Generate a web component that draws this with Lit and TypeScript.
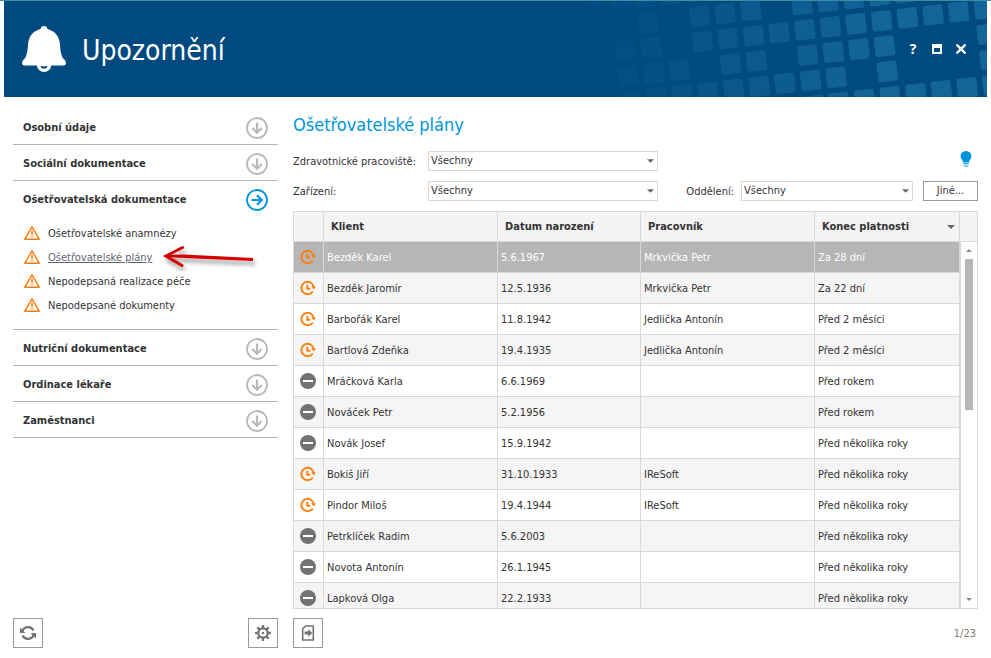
import { LitElement, html, svg, css } from "lit";
import { customElement, state } from "lit/decorators.js";
import { classMap } from "lit/directives/class-map.js";

type Status = "clock" | "minus";
interface Row { status: Status; client: string; born: string; worker: string; ends: string; }

const ROWS: Row[] = [
  { status: "clock", client: "Bezděk Karel", born: "5.6.1967", worker: "Mrkvička Petr", ends: "Za 28 dní" },
  { status: "clock", client: "Bezděk Jaromír", born: "12.5.1936", worker: "Mrkvička Petr", ends: "Za 22 dní" },
  { status: "clock", client: "Barbořák Karel", born: "11.8.1942", worker: "Jedlička Antonín", ends: "Před 2 měsíci" },
  { status: "clock", client: "Bartlová Zdeňka", born: "19.4.1935", worker: "Jedlička Antonín", ends: "Před 2 měsíci" },
  { status: "minus", client: "Mráčková Karla", born: "6.6.1969", worker: "", ends: "Před rokem" },
  { status: "minus", client: "Nováček Petr", born: "5.2.1956", worker: "", ends: "Před rokem" },
  { status: "minus", client: "Novák Josef", born: "15.9.1942", worker: "", ends: "Před několika roky" },
  { status: "clock", client: "Bokiš Jiří", born: "31.10.1933", worker: "IReSoft", ends: "Před několika roky" },
  { status: "clock", client: "Pindor Miloš", born: "19.4.1944", worker: "IReSoft", ends: "Před několika roky" },
  { status: "minus", client: "Petrklíček Radim", born: "5.6.2003", worker: "", ends: "Před několika roky" },
  { status: "minus", client: "Novota Antonín", born: "26.1.1945", worker: "", ends: "Před několika roky" },
  { status: "minus", client: "Lapková Olga", born: "22.2.1933", worker: "", ends: "Před několika roky" },
];

const SECTIONS: { title: string; items?: string[] }[] = [
  { title: "Osobní údaje" },
  { title: "Sociální dokumentace" },
  {
    title: "Ošetřovatelská dokumentace",
    items: ["Ošetřovatelské anamnézy", "Ošetřovatelské plány", "Nepodepsaná realizace péče", "Nepodepsané dokumenty"],
  },
  { title: "Nutriční dokumentace" },
  { title: "Ordinace lékaře" },
  { title: "Zaměstnanci" },
];

/* Tilted lattice of the banner: row number -> occupied columns. */
const LATTICE: [number, number[]][] = [
  [-1, [-4, -3, -2, -1, 0]],
  [0, [-2, 0, 1, 2, 4, 5, 6, 7, 8]],
  [1, [-3, -2, 0, 1, 2, 3, 4, 5, 6, 7, 8, 9, 10, 11]],
  [2, [-3, -2, -1, 1, 2, 4, 5, 6, 7, 11]],
  [3, [-3, -2, -1, 0, 1, 2, 3, 4, 5, 7, 11]],
  [4, [4, 5, 6, 7, 8, 9, 10, 11]],
];

const lattice = () => html`
  <svg class="lattice" viewBox="0 3 1191 288" aria-hidden="true">
    ${LATTICE.flatMap(([j, cols]) =>
      cols.map((i) => {
        const x = 337 + 76.9 * i + 8.5 * (j - 1);
        const y = 125 - 8.9 * i + 75.8 * (j - 1);
        const o = Math.min(1, Math.max(0.08, (x + 20) / 860));
        return svg`<rect x="-30" y="-30" width="60" height="60" rx="7" fill="#136499" fill-opacity=${o.toFixed(2)}
          transform="translate(${x.toFixed(1)} ${y.toFixed(1)}) rotate(-6.6)"/>`;
      })
    )}
  </svg>`;

const bell = html`
  <svg class="bell" viewBox="0 0 44 46" aria-hidden="true">
    <path fill="#fff" d="M22 0c1.900 0 3.300 1.300 3.400 3.100C33.500 5 37.500 11 38 19c.6 8.500 1.800 12.600 4.700 15.100 1.900 1.700 1.600 5.400-1 5.400H2.300c-2.600 0-2.900-3.700-1-5.400C4.200 31.600 5.400 27.500 6 19 6.500 11 10.500 5 18.600 3.100 18.700 1.300 20.100 0 22 0z"/>
    <path fill="#fff" d="M15 38h14.200v1.500a7.100 6.500 0 0 1-14.200 0z"/>
    <path fill="#004a80" d="M18.500 39.800q1.700.8 3.500.8t3.500-.8q-.4 3-3.500 3t-3.500-3z"/>
  </svg>`;

const circleArrow = (open: boolean) => html`
  <svg class=${classMap({ circle: true, open })} viewBox="0 0 22 22" aria-hidden="true">
    <g fill="none" stroke="currentColor" transform=${open ? "rotate(-90 11 11)" : "rotate(0)"}>
      <circle cx="11" cy="11" r="10" stroke-width="1.800"/>
      <path stroke-width="2.200" d="M11 5.500v10.500M6.300 11l4.700 4.700 4.700-4.700"/>
    </g>
  </svg>`;

const warning = html`
  <svg class="warn" viewBox="0 0 16 14" aria-hidden="true">
    <path d="M8 1 15.200 13.200H.8z" fill="none" stroke="#fb7f10" stroke-width="1.500" stroke-linejoin="round"/>
    <path d="M8 5v4M8 10v1.600" stroke="#fb7f10" stroke-width="1.600"/>
  </svg>`;

const statusIcon = (s: Status) =>
  s === "clock"
    ? html`<svg class="status" viewBox="0 0 16 16" role="img" aria-label="Čeká">
        <path d="M12.800 11.400A6.200 6.200 0 1 1 13.800 7.500" fill="none" stroke="#fb7f10" stroke-width="1.900"/>
        <path d="M11.200 6.200H16L13.800 9.400z" fill="#fb7f10"/>
        <path d="M7.300 4.800v3.900h3" fill="none" stroke="#fb7f10" stroke-width="1.900"/>
      </svg>`
    : html`<svg class="status" viewBox="0 0 16 16" role="img" aria-label="Chybí">
        <circle cx="8" cy="8" r="8" fill="#737373"/>
        <path d="M3 8h10" stroke="#fff" stroke-width="2"/>
      </svg>`;

const refreshIcon = html`
  <svg class="glyph" viewBox="0 0 16 16" aria-hidden="true">
    <g fill="none" stroke="#737373" stroke-width="2.300">
      <path d="M2.300 6.400A6 6 0 0 1 13.400 5.400"/><path d="M13.700 9.600A6 6 0 0 1 2.600 10.600"/>
    </g>
    <path fill="#737373" d="M0 2.600V8h5.400zM16 13.400V8h-5.400z"/>
  </svg>`;

const gearIcon = html`
  <svg class="glyph" viewBox="0 0 16 16" aria-hidden="true">
    <circle cx="8" cy="8" r="4.700" fill="none" stroke="#737373" stroke-width="2.200"/>
    <g stroke="#737373" stroke-width="2.400">
      ${[0, 45, 90, 135, 180, 225, 270, 315].map((a) => svg`<path d="M8 0v3" transform="rotate(${a} 8 8)"/>`)}
    </g>
    <circle cx="8" cy="8" r="1.300" fill="#737373"/>
  </svg>`;

const exportIcon = html`
  <svg class="glyph" viewBox="0 0 16 16" aria-hidden="true">
    <path d="M5.500 1h7.800v14H2.700V3.800z" fill="none" stroke="#737373" stroke-width="1.600" stroke-linejoin="round"/>
    <path d="M4.600 6.600h3.600V4.200L12.400 8 8.200 11.800V9.400H4.600z" fill="#737373"/>
  </svg>`;

@customElement("app-root")
export class AppRoot extends LitElement {
  @state() private section = 2;
  @state() private link = 1;
  @state() private selected = 0;

  static styles = css`
    :host {
      display: flex; flex-direction: column; height: 100vh; box-sizing: border-box;
      border-top: 1px solid #3b8ea5; background: #fff; color: #333;
      font: 11px/16px "DejaVu Sans Condensed", "DejaVu Sans", sans-serif;
    }
    * { box-sizing: border-box; }
    button, select { font: inherit; color: inherit; border-radius: 0; margin: 0; padding: 0; background: none; border: 0; }
    svg { display: block; flex: none; }

    .banner {
      position: relative; overflow: hidden; flex: none; display: flex; align-items: center;
      height: 96px; margin: 0 4px; padding: 0 18px; background: #004a80; color: #fff;
    }
    .lattice { position: absolute; right: 0; top: 0; width: 397px; height: 96px; }
    .bell { width: 44px; height: 46px; }
    .banner h1 { flex: 1; margin: 0 0 0 16px; padding-top: 4px; font-size: 28px; line-height: 40px; font-weight: 400; }
    .window { position: relative; display: flex; gap: 8px; }
    .window button { width: 16px; height: 20px; display: grid; place-items: center; font: 700 14px/20px "Open Sans", sans-serif; }
    .window svg { width: 10px; height: 10px; }

    .body {
      flex: 1; min-height: 0; display: grid; grid-template-columns: 265px minmax(0, 1fr);
      column-gap: 15px; padding: 12px 13px 10px;
    }
    .side, .main { display: flex; flex-direction: column; min-height: 0; }
    .nav { flex: 1; }
    .section { border-bottom: 1px solid #b4b4b4; }
    .head, th, .sort { font-weight: 700; }
    .head {
      width: 100%; height: 35px; padding: 3px 10px 0; display: flex; align-items: center; justify-content: space-between;
      text-align: left; line-height: 18px;
    }
    .circle { width: 22px; height: 22px; color: #b9b9b9; }
    .circle.open { color: #0095dd; }
    .links { list-style: none; margin: 0; padding: 5px 11px 12px; }
    .links li { position: relative; height: 24px; display: flex; align-items: center; gap: 8px; }
    .links a { color: inherit; text-decoration: none; padding-top: 2px; }
    .links a.current { color: #5f6472; text-decoration: underline; }
    .warn { width: 16px; height: 14px; }
    .pointer { position: absolute; left: 138px; top: -2px; width: 96px; height: 28px; }
    .bar { display: flex; align-items: center; justify-content: space-between; flex: none; }
    .icon-btn { width: 30px; height: 30px; border: 1px solid #999; display: grid; place-items: center; }
    .glyph { width: 16px; height: 16px; }

    h2 { margin: 2px 0 12px; font-size: 18px; line-height: 28px; font-weight: 400; color: #0095dd; }
    .filters { display: flex; flex-direction: column; gap: 10px; margin-bottom: 10px; flex: none; }
    .filter { display: flex; align-items: center; height: 20px; }
    .filter label { padding-top: 2px; }
    .label { width: 135px; }
    .select { position: relative; width: 230px; height: 20px; }
    .select select { appearance: none; width: 100%; height: 20px; padding: 0 20px 0 2px; border: 1px solid #d9d9d9; background: #fff; }
    .select svg { position: absolute; right: 4px; top: 8px; width: 7px; height: 4px; pointer-events: none; }
    .right { margin-left: auto; display: flex; align-items: center; }
    .right .select { width: 172px; margin: 0 10px 0 7px; }
    .other { width: 55px; height: 20px; border: 1px solid #999; line-height: 16px; }
    .bulb { width: 12px; height: 16px; margin: -4px 6px 0 0; }

    .grid { flex: 1; min-height: 0; display: flex; border: 1px solid #d9d9d9; }
    .scroll { flex: 1; min-width: 0; overflow: hidden; }
    table { width: 100%; table-layout: fixed; border-collapse: separate; border-spacing: 0; }
    .c-icon { width: 30px; } .c-client { width: 174px; } .c-born { width: 143px; } .c-worker { width: 174px; }
    th, td { border: 0 solid #d9d9d9; border-width: 0 1px 1px 0; text-align: left; white-space: nowrap; }
    th { height: 30px; padding: 0 7px; background: #f4f4f4; }
    td { height: 31px; padding: 2px 3px 0; }
    td:first-child { padding: 0 6px; }
    tbody tr:nth-child(even) { background: #f5f5f5; }
    tbody tr.selected { background: #b6b6b6; color: #fff; }
    .sort { display: flex; align-items: center; justify-content: space-between; width: 100%; }
    .sort svg { width: 8px; height: 4px; margin-right: -3px; }
    .status { width: 16px; height: 16px; }
    .track { width: 17px; display: flex; flex-direction: column; align-items: center; }
    .cap { width: 100%; height: 30px; background: #f4f4f4; border-bottom: 1px solid #d9d9d9; }
    .rail { flex: 1; width: 100%; border-left: 1px solid #d9d9d9; display: flex; flex-direction: column; align-items: center; padding: 7px 0; }
    .rail svg { width: 6px; height: 3px; }
    .thumb { width: 8px; height: 43%; margin: 7px 0 auto; background: #b6b6b6; }
    .main .bar { margin-top: 9px; }
    .count { padding: 2px 2px 0 0; color: #857a72; }
  `;

  private down = html`<svg viewBox="0 0 8 4" aria-hidden="true"><path d="M0 0h8L4 4z" fill="#666"/></svg>`;

  private select(id: string) {
    return html`<span class="select"><select id=${id}><option>Všechny</option></select>${this.down}</span>`;
  }

  render() {
    return html`
      <header class="banner">
        ${lattice()} ${bell}
        <h1>Upozornění</h1>
        <div class="window">
          <button aria-label="Nápověda">?</button>
          <button aria-label="Maximalizovat">
            <svg viewBox="0 0 10 10"><path fill="#fff" fill-rule="evenodd" d="M0 0h10v10H0zM2 4v4h6V4z"/></svg>
          </button>
          <button aria-label="Zavřít">
            <svg viewBox="0 0 10 10"><path d="M.5.500l9 9M9.500.500l-9 9" stroke="#fff" stroke-width="2.400"/></svg>
          </button>
        </div>
      </header>
      <div class="body">
        <aside class="side">
          <nav class="nav">${SECTIONS.map((s, i) => this.renderSection(s, i))}</nav>
          <div class="bar">
            <button class="icon-btn" aria-label="Obnovit">${refreshIcon}</button>
            <button class="icon-btn" aria-label="Nastavení">${gearIcon}</button>
          </div>
        </aside>
        <main class="main">
          <h2>Ošetřovatelské plány</h2>
          <div class="filters">
            <div class="filter">
              <label class="label" for="place">Zdravotnické pracoviště:</label>${this.select("place")}
              <div class="right">
                <svg class="bulb" viewBox="0 0 12 16" aria-hidden="true">
                  <path fill="#0095dd" d="M6 0a5.500 5.500 0 0 1 5.500 5.500C11.500 8 9 8.800 9 11.500H3C3 8.800.5 8 .5 5.500A5.500 5.500 0 0 1 6 0z"/>
                  <path stroke="#0095dd" stroke-opacity=".7" d="M3 12.500h6M3.500 14h5M4.500 15.500h3"/>
                </svg>
              </div>
            </div>
            <div class="filter">
              <label class="label" for="facility">Zařízení:</label>${this.select("facility")}
              <div class="right">
                <label for="ward">Oddělení:</label>${this.select("ward")}
                <button class="other">Jiné...</button>
              </div>
            </div>
          </div>
          <div class="grid">
            <div class="scroll">
              <table>
                <colgroup><col class="c-icon"><col class="c-client"><col class="c-born"><col class="c-worker"><col></colgroup>
                <thead>
                  <tr>
                    <th></th><th>Klient</th><th>Datum narození</th><th>Pracovník</th>
                    <th aria-sort="descending"><button class="sort">Konec platnosti ${this.down}</button></th>
                  </tr>
                </thead>
                <tbody>
                  ${ROWS.map((r, i) => html`
                    <tr class=${classMap({ selected: i === this.selected })} @click=${() => (this.selected = i)}>
                      <td>${statusIcon(r.status)}</td><td>${r.client}</td><td>${r.born}</td><td>${r.worker}</td><td>${r.ends}</td>
                    </tr>`)}
                </tbody>
              </table>
            </div>
            <div class="track" aria-hidden="true">
              <div class="cap"></div>
              <div class="rail">
                <svg viewBox="0 0 6 3"><path d="M0 3h6L3 0z" fill="#888"/></svg>
                <div class="thumb"></div>
                <svg viewBox="0 0 6 3"><path d="M0 0h6L3 3z" fill="#888"/></svg>
              </div>
            </div>
          </div>
          <div class="bar">
            <button class="icon-btn" aria-label="Export">${exportIcon}</button>
            <span class="count">1/23</span>
          </div>
        </main>
      </div>`;
  }

  private renderSection(s: { title: string; items?: string[] }, i: number) {
    const open = i === this.section;
    return html`
      <div class="section">
        <button class="head" aria-expanded=${open} @click=${() => (this.section = i)}>${s.title} ${circleArrow(open)}</button>
        ${open && s.items
          ? html`<ul class="links">
              ${s.items.map((t, k) => html`
                <li>
                  ${warning}
                  <a href="#" class=${classMap({ current: k === this.link })}
                    @click=${(e: Event) => { e.preventDefault(); this.link = k; }}>${t}</a>
                  ${k === this.link ? this.pointer : ""}
                </li>`)}
            </ul>`
          : ""}
      </div>`;
  }

  private pointer = html`
    <svg class="pointer" viewBox="0 0 96 28" aria-hidden="true">
      <defs>
        <filter id="soft" x="-20%" y="-50%" width="140%" height="220%">
          <feDropShadow dx="2" dy="4" stdDeviation="2" flood-color="#000" flood-opacity=".4"/>
        </filter>
      </defs>
      <g filter="url(#soft)">
        <path d="M20.500 4.500 4 13l16 9.500" fill="none" stroke="#d40000" stroke-width="3" stroke-linecap="round" stroke-linejoin="miter"/>
        <path d="M5 12 22 11.500l69 3.500v3l-69-3-17-1z" fill="#d40000"/>
      </g>
    </svg>`;
}
